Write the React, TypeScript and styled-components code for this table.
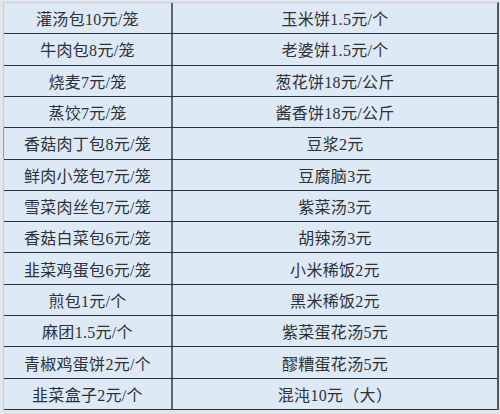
import styled, { createGlobalStyle } from 'styled-components';

const rows: [string, string][] = [
  ['灌汤包10元/笼', '玉米饼1.5元/个'],
  ['牛肉包8元/笼', '老婆饼1.5元/个'],
  ['烧麦7元/笼', '葱花饼18元/公斤'],
  ['蒸饺7元/笼', '酱香饼18元/公斤'],
  ['香菇肉丁包8元/笼', '豆浆2元'],
  ['鲜肉小笼包7元/笼', '豆腐脑3元'],
  ['雪菜肉丝包7元/笼', '紫菜汤3元'],
  ['香菇白菜包6元/笼', '胡辣汤3元'],
  ['韭菜鸡蛋包6元/笼', '小米稀饭2元'],
  ['煎包1元/个', '黑米稀饭2元'],
  ['麻团1.5元/个', '紫菜蛋花汤5元'],
  ['青椒鸡蛋饼2元/个', '醪糟蛋花汤5元'],
  ['韭菜盒子2元/个', '混沌10元（大）'],
];

const GlobalStyle = createGlobalStyle`
  html, body {
    margin: 0;
    padding: 0;
    background: #d9dcdf;
  }
`;

const App: React.FC = () => {
  return (
    <>
      <GlobalStyle />
      <Sheet>
        <Table>
          {rows.map(([left, right], i) => (
            <Row key={i}>
              <Cell $first $selected={i === 4}>{left}</Cell>
              <Cell>{right}</Cell>
            </Row>
          ))}
        </Table>
      </Sheet>
    </>
  );
};
export default App;

const Sheet = styled.div`
    width: 500px;
    height: 414px;
    box-sizing: border-box;
    padding: 2px 1px 4px 3px;
    background: #e3e5e8;
    border-top: 0;
`;
const Table = styled.div`
    height: 408px;
    display: grid;
    grid-template-rows: repeat(13, 1fr);
    border-right: 2px solid #4f5862;
    border-left: 1px solid #c9ced4;
    border-top: 1px solid #c9d2dc;
    background: #dde9f5;
    box-sizing: border-box;
`;
const Row = styled.div`
    display: grid;
    grid-template-columns: 169px 1fr;
    border-bottom: 1px solid #25313d;
    min-height: 0;
`;
const Cell = styled.div<{ $first?: boolean; $selected?: boolean }>`
    display: flex;
    align-items: center;
    justify-content: center;
    font-family: 'Liberation Serif', 'Noto Sans CJK SC', serif;
    font-size: 16px;
    color: #2e3236;
    letter-spacing: 0.3px;
    border-right: ${(p) => (p.$first ? '2px solid #5e6770' : '0')};
    box-shadow: ${(p) => (p.$selected ? 'inset 1px 0 0 #6dbb5b' : 'none')};
    margin-left: ${(p) => (p.$selected ? '-1px' : '0')};
    padding-left: ${(p) => (p.$selected ? '1px' : '0')};
    white-space: nowrap;
`;
